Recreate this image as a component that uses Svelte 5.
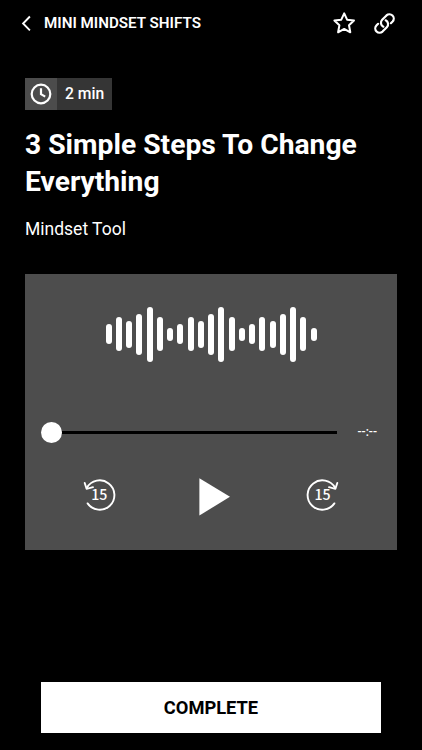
<script lang="ts">
  // One swell of the waveform, repeated three times across the player
  const swell = [20, 34, 27, 41, 55, 34, 13];
  const bars = [...swell, ...swell, ...swell];

  let starred = $state(false);
  let playing = $state(false);
  let time = $state('--:--');
</script>

<main class="screen">
  <header>
    <button class="back" aria-label="Back">
      <svg width="10" height="16" viewBox="0 0 10 16">
        <path d="M8.9 1.5 2.1 8.5l6.8 6.8" fill="none" stroke="#fff" stroke-width="1.9" />
      </svg>
    </button>
    <span class="title">MINI MINDSET SHIFTS</span>
    <button class="star" aria-label="Favourite" onclick={() => (starred = !starred)}>
      <svg width="24" height="24" viewBox="0 0 24 24">
        <path
          d="M12.2 2.4l2.9 6.3 6.9.8-5 4.8 1.3 7-6.1-3.4-6.1 3.4 1.3-7-5-4.8 6.9-.8z"
          fill={starred ? '#fff' : 'none'}
          stroke="#fff"
          stroke-width="2"
          stroke-linejoin="round"
        />
      </svg>
    </button>
    <button class="link" aria-label="Copy link">
      <svg width="23" height="23" viewBox="0 0 24 24" fill="none" stroke="#fff" stroke-width="2.3" stroke-linecap="round">
        <path d="M13.19 8.69a4.5 4.5 0 0 1 1.24 7.24l-4.5 4.5a4.5 4.5 0 0 1-6.36-6.36l1.75-1.76" />
        <path d="M18.68 11.69l1.75-1.76a4.5 4.5 0 0 0-6.36-6.36l-4.5 4.5a4.5 4.5 0 0 0 1.24 7.24" />
      </svg>
    </button>
  </header>

  <section class="intro">
    <div class="duration">
      <span class="clock">
        <svg width="22" height="22" viewBox="0 0 22 22" fill="none" stroke="#fff" stroke-width="2.2">
          <circle cx="11" cy="11" r="9.3" />
          <path d="M11 5.2v6l4.2 2.4" />
        </svg>
      </span>
      <span class="minutes">2 min</span>
    </div>
    <h1>3 Simple Steps To Change Everything</h1>
    <p>Mindset Tool</p>
  </section>

  <section class="player">
    <div class="wave">
      {#each bars as height}
        <i style={`height:${height}px`}></i>
      {/each}
    </div>

    <div class="progress">
      <div class="track">
        <span class="knob"></span>
        <span class="line"></span>
      </div>
      <span class="time">{time}</span>
    </div>

    <div class="controls">
      <button aria-label="Back 15 seconds">
        <svg width="34" height="34" viewBox="0 0 34 34">
          <g fill="none" stroke="#fff" stroke-width="1.9" stroke-linecap="round" stroke-linejoin="round">
            <path d="M4.8 10A14.7 14.7 0 1 1 5.6 25.4" />
            <path d="M2.7 5l1.9 5.8 6.4-1.6" />
          </g>
          <text x="17.3" y="22.3">15</text>
        </svg>
      </button>
      <button class="play" aria-label="Play" onclick={() => (playing = !playing)}>
        <svg width="31" height="38" viewBox="0 0 31 38">
          <path d="M.4 .3 31 18.8 .4 37.5z" fill="#fff" />
        </svg>
      </button>
      <button aria-label="Forward 15 seconds">
        <svg width="34" height="34" viewBox="0 0 34 34">
          <g fill="none" stroke="#fff" stroke-width="1.9" stroke-linecap="round" stroke-linejoin="round">
            <path d="M29.2 10A14.7 14.7 0 1 0 28.4 25.4" />
            <path d="M31.3 5l-1.9 5.8-6.4-1.6" />
          </g>
          <text x="16.5" y="22.3">15</text>
        </svg>
      </button>
    </div>
  </section>

  <button class="complete">COMPLETE</button>
</main>

<style>
  :global(body) { background: #000; }
  .screen {
    box-sizing: border-box;
    height: 750px;
    display: flex;
    flex-direction: column;
    background: #000;
    color: #fff;
    font-family: Roboto, "Liberation Sans", sans-serif;
    overflow: hidden;
  }
  button {
    padding: 0;
    border: none;
    background: none;
    color: inherit;
    font: inherit;
    cursor: pointer;
  }
  svg { display: block; }
  header {
    display: flex;
    align-items: center;
    height: 46px;
    padding: 0 26px 0 21px;
  }
  .title {
    margin-left: 13px;
    font-size: 15.2px;
    font-weight: 600;
    white-space: nowrap;
  }
  .star { margin-left: auto; }
  .link { margin-left: 17px; }
  .intro { padding: 32px 25px 0; }
  .duration {
    display: flex;
    width: 87px;
    height: 32px;
    background: #353535;
  }
  .clock {
    display: grid;
    place-items: center;
    width: 32px;
    background: #4c4c4c;
  }
  .minutes {
    margin-left: 8px;
    font-size: 15.7px;
    font-weight: 500;
    line-height: 32px;
  }
  h1 {
    margin: 16px 0 0;
    font-size: 28.25px;
    font-weight: 700;
    line-height: 37px;
  }
  p {
    margin: 18px 0 0;
    font-size: 17.5px;
    line-height: 22px;
  }
  .player {
    box-sizing: border-box;
    height: 276px;
    margin: 34px 25px 0;
    padding: 32px 16px 0;
    background: #4d4d4d;
  }
  .wave {
    display: flex;
    align-items: center;
    justify-content: space-between;
    width: 211px;
    height: 56px;
    margin: 0 auto;
  }
  .wave i {
    width: 6px;
    border-radius: 3px;
    background: #fff;
  }
  .progress {
    display: flex;
    align-items: center;
    justify-content: space-between;
    height: 22px;
    margin-top: 59px;
  }
  .track {
    display: flex;
    align-items: center;
    width: 296px;
  }
  .knob {
    width: 21px;
    height: 21px;
    border-radius: 50%;
    background: #fff;
  }
  .line {
    flex: 1;
    height: 3px;
    background: #000;
  }
  .time {
    margin-right: 4px;
    font-size: 12px;
    font-weight: 500;
  }
  .controls {
    display: flex;
    align-items: flex-start;
    justify-content: space-between;
    margin: 35px 41px 0;
  }
  .play { margin-left: 6px; }
  .controls text {
    fill: #fff;
    font-family: "Noto Sans CJK SC", "Noto Sans", sans-serif;
    font-size: 14.2px;
    font-weight: 500;
    text-anchor: middle;
  }
  .complete {
    height: 51px;
    margin: auto 41px 17px;
    background: #fff;
    color: #000;
    font-size: 18.3px;
    font-weight: 700;
  }
</style>
